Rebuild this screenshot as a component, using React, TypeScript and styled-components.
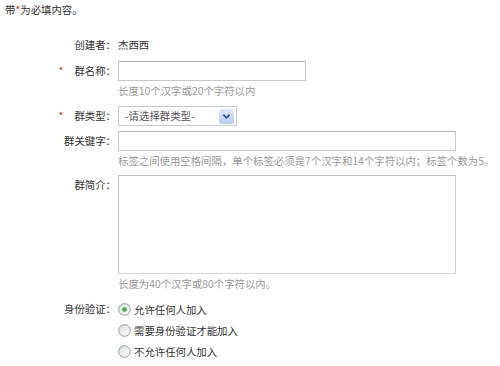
import React from 'react'
import styled, { createGlobalStyle } from 'styled-components'

const GlobalStyle = createGlobalStyle`
  html, body {
    margin: 0;
    padding: 0;
    background: #fff;
  }
  body {
    font-family: "Noto Sans CJK SC", "Liberation Sans", sans-serif;
    font-size: 10.4px;
    color: #333;
  }
`

const radios = [
  { text: '允许任何人加入', checked: true },
  { text: '需要身份验证才能加入', checked: false },
  { text: '不允许任何人加入', checked: false },
]

const Radio = ({ checked }: { checked: boolean }) => (
  <RadioIcon viewBox="0 0 13 13" width="13" height="13">
    <defs>
      <linearGradient id="rg" x1="0" y1="0" x2="1" y2="1">
        <stop offset="0" stopColor="#dcdcd6" />
        <stop offset="1" stopColor="#ffffff" />
      </linearGradient>
    </defs>
    <circle cx="6.5" cy="6.5" r="5.8" fill="url(#rg)" stroke="#8c9cb0" strokeWidth="1" />
    {checked && <circle cx="6.5" cy="6.5" r="2.3" fill="#3fae3a" />}
  </RadioIcon>
)

const App = () => {
  return (
    <Page>
      <GlobalStyle />
      <Notice>
        带<Star $gap={0}>*</Star>为必填内容。
      </Notice>
      <Form>
        <Row $top={15}>
          <Label>创建者：</Label>
          <Value>杰西西</Value>
        </Row>
        <Row $top={6}>
          <Label>
            <Star $gap={11}>*</Star>群名称：
          </Label>
          <Field>
            <Input $width={188} />
            <Hint>长度10个汉字或20个字符以内</Hint>
          </Field>
        </Row>
        <Row $top={5}>
          <Label>
            <Star $gap={11}>*</Star>群类型：
          </Label>
          <Select>
            <SelectText>-请选择群类型-</SelectText>
            <SelectButton>
              <svg viewBox="0 0 10 10" width="9" height="9">
                <path d="M1.5 3 L5 6.5 L8.5 3" fill="none" stroke="#2a4d9c" strokeWidth="2" />
              </svg>
            </SelectButton>
          </Select>
        </Row>
        <Row $top={5}>
          <Label>群关键字：</Label>
          <Field>
            <Input $width={338} />
            <Hint>标签之间使用空格间隔，单个标签必须是7个汉字和14个字符以内；标签个数为5。</Hint>
          </Field>
        </Row>
        <Row $top={4}>
          <Label>群简介：</Label>
          <Field>
            <TextArea />
            <Hint>长度为40个汉字或80个字符以内。</Hint>
          </Field>
        </Row>
        <Row $top={5}>
          <Label>身份验证：</Label>
          <Field>
            {radios.map((r) => (
              <RadioRow key={r.text}>
                <Radio checked={r.checked} />
                <span>{r.text}</span>
              </RadioRow>
            ))}
          </Field>
        </Row>
      </Form>
    </Page>
  )
}

export default App

const Page = styled.div`
  width: 500px;
  height: 366px;
  overflow: hidden;
  padding-left: 5px;
  box-sizing: border-box;
`
const Notice = styled.div`
  line-height: 20px;
  color: #333;
`
const Star = styled.span<{ $gap: number }>`
  color: #e0201c;
  margin-right: ${(p) => p.$gap}px;
`
const Form = styled.div`
  display: flex;
  flex-direction: column;
`
const Row = styled.div<{ $top: number }>`
  display: grid;
  grid-template-columns: 111px 1fr;
  column-gap: 2px;
  margin-top: ${(p) => p.$top}px;
  align-items: start;
`
const Label = styled.div`
  text-align: right;
  line-height: 20px;
  color: #333;
  white-space: nowrap;
`
const Value = styled.div`
  line-height: 20px;
  color: #333;
`
const Field = styled.div`
  display: flex;
  flex-direction: column;
`
const Input = styled.div<{ $width: number }>`
  width: ${(p) => p.$width}px;
  height: 20px;
  box-sizing: border-box;
  border: 1px solid #c9c9c9;
  border-top-color: #b8b8b8;
  background: #fff;
`
const TextArea = styled.div`
  width: 338px;
  height: 99px;
  box-sizing: border-box;
  border: 1px solid #c2c2c2;
  border-right-color: #d6d6d6;
  border-bottom-color: #d6d6d6;
  background: #fff;
`
const Hint = styled.div`
  line-height: 20px;
  color: #999;
  white-space: nowrap;
`
const Select = styled.div`
  width: 119px;
  height: 20px;
  box-sizing: border-box;
  border: 1px solid #c6ccd6;
  display: flex;
  align-items: center;
  justify-content: space-between;
  padding: 0 2px 0 6px;
  background: #fff;
`
const SelectText = styled.span`
  color: #555;
  line-height: 18px;
`
const SelectButton = styled.div`
  width: 15px;
  height: 15px;
  background: linear-gradient(#dde8fb, #b9cdf3);
  border-radius: 2px;
  display: flex;
  align-items: center;
  justify-content: center;
`
const RadioRow = styled.div`
  display: flex;
  align-items: center;
  gap: 3px;
  height: 21px;
  color: #333;
`
const RadioIcon = styled.svg`
  flex: none;
`
